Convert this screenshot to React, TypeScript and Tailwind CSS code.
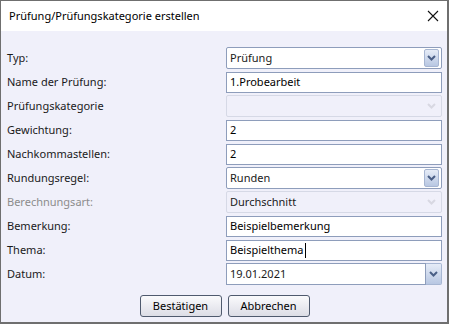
import React from 'react';

type Row = {
  label: string;
  kind: 'text' | 'combo' | 'combo-disabled' | 'date';
  value?: string;
  dimLabel?: boolean;
  caret?: boolean;
};

const rows: Row[] = [
  { label: 'Typ:', kind: 'combo', value: 'Prüfung' },
  { label: 'Name der Prüfung:', kind: 'text', value: '1.Probearbeit' },
  { label: 'Prüfungskategorie', kind: 'combo-disabled', value: '' },
  { label: 'Gewichtung:', kind: 'text', value: '2' },
  { label: 'Nachkommastellen:', kind: 'text', value: '2' },
  { label: 'Rundungsregel:', kind: 'combo', value: 'Runden' },
  { label: 'Berechnungsart:', kind: 'combo-disabled', value: 'Durchschnitt', dimLabel: true },
  { label: 'Bemerkung:', kind: 'text', value: 'Beispielbemerkung' },
  { label: 'Thema:', kind: 'text', value: 'Beispielthema', caret: true },
  { label: 'Datum:', kind: 'date', value: '19.01.2021' },
];

const Chevron = ({ color }: { color: string }) => (
  <svg width="9" height="6" viewBox="0 0 9 6">
    <polyline points="1,1 4.5,4.5 8,1" fill="none" stroke={color} strokeWidth="2" />
  </svg>
);

const DropButton = ({ disabled }: { disabled?: boolean }) =>
  disabled ? (
    <div className="flex w-[15px] h-[18px] items-center justify-center">
      <Chevron color="#d8d8e2" />
    </div>
  ) : (
    <div className="flex w-[15px] h-[18px] items-center justify-center rounded-[2px] border border-[#a7b6d2] bg-gradient-to-b from-[#e6ecf7] to-[#b8c7e2]">
      <Chevron color="#4a5f86" />
    </div>
  );

const Control = ({ row }: { row: Row }) => {
  if (row.kind === 'text') {
    return (
      <div className="flex h-[21px] w-[216px] items-center border border-[#8e9dbb] bg-white pl-[3px] text-[#000]">
        <span>{row.value}</span>
        {row.caret && <span className="ml-[1px] h-[15px] w-px bg-black" />}
      </div>
    );
  }
  if (row.kind === 'date') {
    return (
      <div className="flex h-[22px] w-[216px]">
        <div className="flex flex-1 items-center border border-[#8e9dbb] bg-white pl-[3px]">{row.value}</div>
        <div className="flex w-[16px] items-center justify-center rounded-r-[2px] border border-l-0 border-[#a7b6d2] bg-gradient-to-b from-[#e6ecf7] to-[#b8c7e2]">
          <Chevron color="#4a5f86" />
        </div>
      </div>
    );
  }
  const disabled = row.kind === 'combo-disabled';
  return (
    <div
      className={
        disabled
          ? 'flex h-[22px] w-[216px] items-center justify-between rounded-[2px] border border-[#d6d9e6] bg-[#f0f0fa] pl-[3px] pr-[2px]'
          : 'flex h-[22px] w-[216px] items-center justify-between rounded-[2px] border border-[#8e9dbb] bg-white pl-[3px] pr-[2px]'
      }
    >
      <span>{row.value}</span>
      <DropButton disabled={disabled} />
    </div>
  );
};

export default function App() {
  return (
    <div
      className="flex h-[324px] w-[449px] flex-col border-l border-t border-b-2 border-r-2 border-[#6f6f6f] bg-[#f0f0fa] text-[11px] text-[#1a1a1a]"
      style={{ fontFamily: '"Noto Sans", sans-serif' }}
    >
      <div className="flex h-[30px] items-center justify-between bg-white pl-[8px] pr-[7px]">
        <span className="text-[11px] text-black">Prüfung/Prüfungskategorie erstellen</span>
        <svg width="12" height="12" viewBox="0 0 12 12" className="mr-[1px]">
          <path d="M1 1 L11 11 M11 1 L1 11" stroke="#111" strokeWidth="1.1" fill="none" />
        </svg>
      </div>

      <div className="flex flex-col gap-[2px] pt-[16px] pl-[6px] pr-[5px]">
        {rows.map(row => (
          <div key={row.label} className="flex h-[22px] items-center justify-between">
            <span className={row.dimLabel ? 'text-[#8c8c8c]' : 'text-[#1a1a1a]'}>{row.label}</span>
            <Control row={row} />
          </div>
        ))}
      </div>

      <div className="mt-[10px] flex justify-center gap-[6px] pl-[1px]">
        <button className="h-[22px] w-[82px] rounded-[3px] border border-[#4f5a6e] bg-gradient-to-b from-[#fafafc] to-[#dcdde6] text-black">
          Bestätigen
        </button>
        <button className="h-[22px] w-[82px] rounded-[3px] border border-[#4f5a6e] bg-gradient-to-b from-[#fafafc] to-[#dcdde6] text-black">
          Abbrechen
        </button>
      </div>
    </div>
  );
}
